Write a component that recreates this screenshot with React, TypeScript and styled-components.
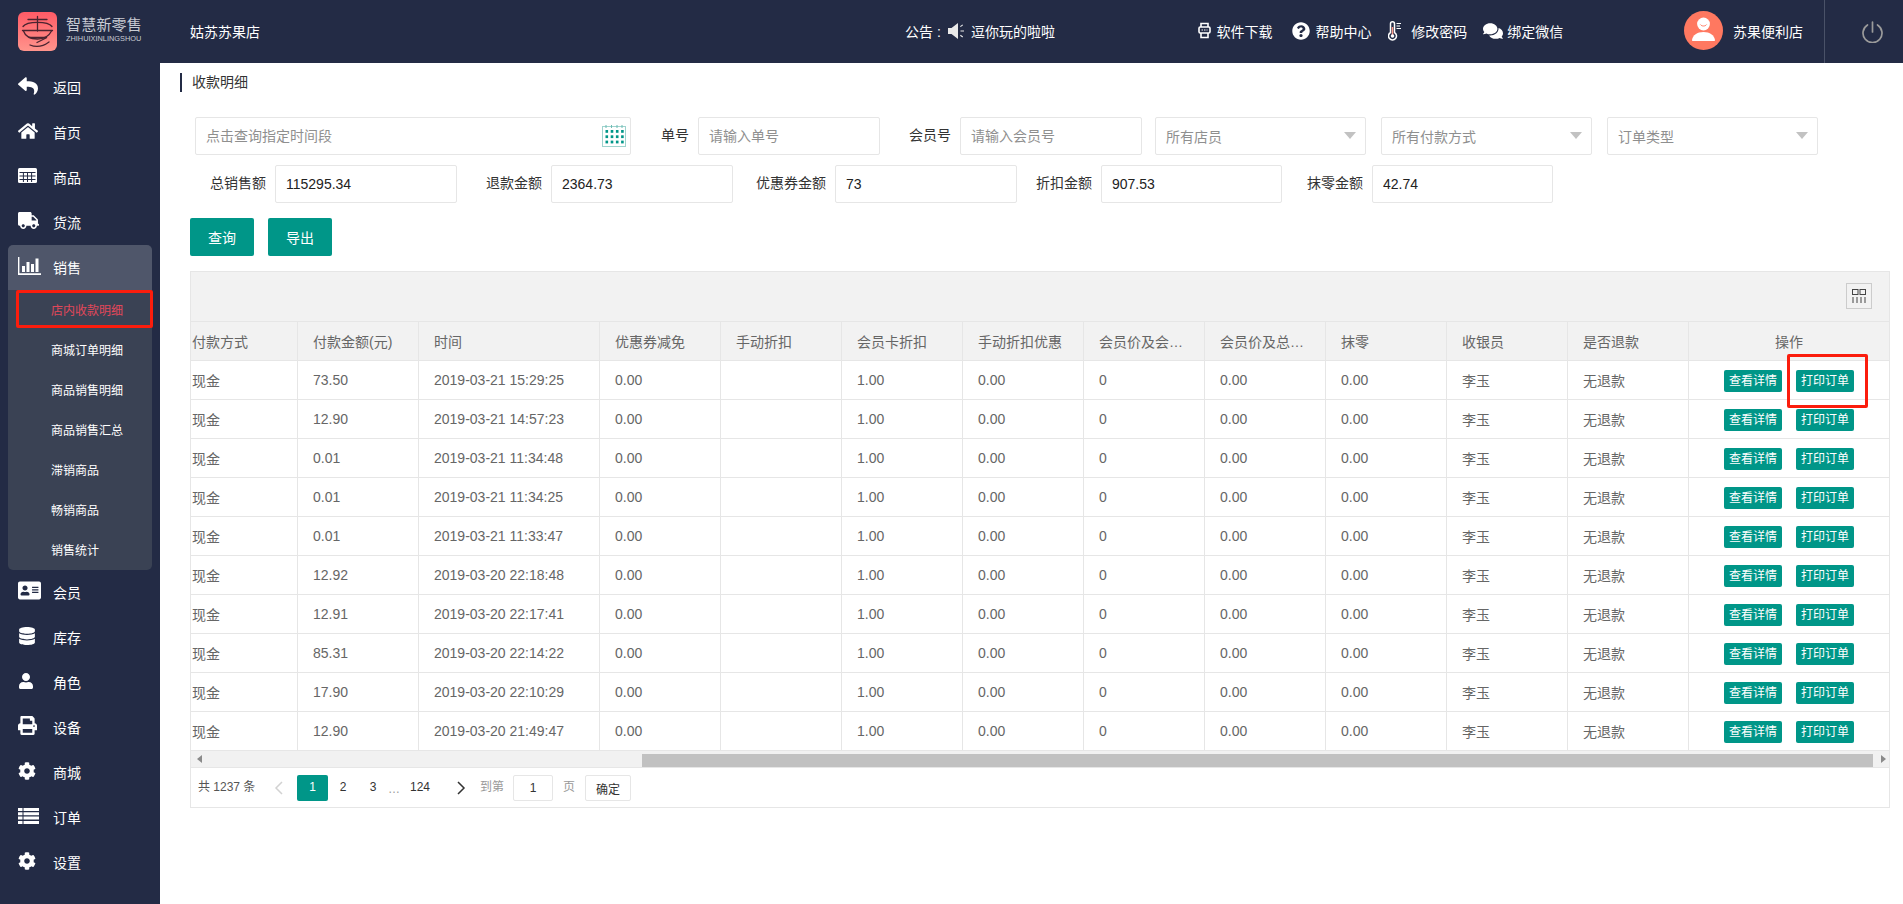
import React from "react";
import styled, { createGlobalStyle } from "styled-components";
import {
  FaReply,
  FaHome,
  FaTruck,
  FaAddressCard,
  FaDatabase,
  FaUser,
  FaPrint,
  FaCog,
  FaQuestionCircle,
  FaComments,
} from "react-icons/fa";

const GlobalStyle = createGlobalStyle`
  html, body {
    margin: 0;
    padding: 0;
    height: 100%;
    background: #fff;
    overflow: hidden;
    font-family: "Liberation Sans", "Noto Sans CJK SC", sans-serif;
    font-size: 14px;
    color: #333;
  }
  * {
    box-sizing: border-box;
  }
`;

const Page = styled.div`
  width: 1903px;
  height: 904px;
  display: flex;
  flex-direction: column;
`;

// top bar
const Header = styled.header`
  height: 63px;
  flex: none;
  background: #232b45;
  color: #fff;
  display: flex;
  align-items: center;
  padding-left: 18px;
`;

const LogoBox = styled.div`
  width: 39px;
  height: 39px;
  flex: none;
  line-height: 0;
`;

const LogoText = styled.div`
  width: 80px;
  margin-left: 9px;
  color: #c9ccd4;
`;

const LogoName = styled.div`
  font-size: 15px;
  line-height: 18px;
  letter-spacing: 0.2px;
  margin-top: -3px;
`;

const LogoPinyin = styled.div`
  font-size: 8px;
  line-height: 10px;
  white-space: nowrap;
  transform-origin: left center;
  transform: scaleX(0.92);
`;

const ShopName = styled.div`
  margin-left: 44px;
  margin-top: -1px;
  width: 70px;
  white-space: nowrap;
`;

const Notice = styled.div`
  margin-left: 645px;
  margin-top: -2px;
  display: flex;
  align-items: center;
  white-space: nowrap;
  width: 151px;
`;

const NoticeLabel = styled.span`
  width: 43px;
`;

const NoticeIcon = styled.span`
  width: 23px;
  height: 18px;
  line-height: 0;
`;

const TopLinks = styled.nav`
  margin-left: 142px;
  margin-top: -2px;
  display: flex;
  gap: 16px;
  width: 366px;
`;

const TopLink = styled.a`
  display: flex;
  align-items: center;
  color: #fff;
  white-space: nowrap;
`;

const TopIcon = styled.span<{ $w: number; $pad?: number }>`
  width: ${(p) => p.$w}px;
  padding-left: ${(p) => p.$pad || 0}px;
  display: flex;
  align-items: center;
  flex: none;
`;

const Avatar = styled.div`
  margin-left: 120px;
  margin-top: -2px;
  width: 39px;
  height: 39px;
  flex: none;
  line-height: 0;
`;

const UserName = styled.div`
  margin-left: 10px;
  margin-top: -1px;
  width: 91px;
  white-space: nowrap;
`;

const PowerBox = styled.div`
  height: 100%;
  flex: 1;
  border-left: 1px solid #4a5268;
  display: flex;
  align-items: center;
  padding-left: 37px;
`;

const Body = styled.div`
  flex: 1;
  display: flex;
  min-height: 0;
`;

// left menu
const Sidebar = styled.aside`
  width: 160px;
  flex: none;
  background: #232b45;
  padding-top: 2px;
`;

const NavItem = styled.div<{ $active?: boolean }>`
  height: 45px;
  margin: 0 8px;
  padding: 0 0 2px 10px;
  display: flex;
  align-items: center;
  color: #fff;
  background: ${(p) => (p.$active ? "#4f566a" : "transparent")};
  border-radius: ${(p) => (p.$active ? "5px 5px 0 0" : "0")};
`;

const NavIcon = styled.span`
  width: 35px;
  flex: none;
  display: flex;
  align-items: center;
  margin-top: -2px;
`;

const SubMenu = styled.div`
  margin: 0 8px;
  background: #3a4254;
  border-radius: 0 0 5px 5px;
`;

const SubItem = styled.div<{ $active?: boolean }>`
  position: relative;
  height: 40px;
  line-height: 42px;
  padding-left: 43px;
  font-size: 12px;
  color: ${(p) => (p.$active ? "#e2475a" : "#fff")};
`;

const SubMark = styled.span`
  position: absolute;
  left: 8px;
  right: -1px;
  top: 0;
  height: 38px;
  border: 3px solid #fb1d0d;
  border-radius: 2px;
`;

const Main = styled.main`
  flex: 1;
  padding: 10px 13px 0 20px;
  min-width: 0;
`;

const Title = styled.div`
  height: 19px;
  line-height: 19px;
  border-left: 2px solid #232b45;
  padding-left: 10px;
  color: #333;
`;

const Content = styled.div`
  padding-left: 10px;
`;

const Form = styled.div`
  margin-top: 25px;
  display: flex;
  flex-direction: column;
  gap: 10px;
`;

const FormRow = styled.div<{ $inset?: number }>`
  display: flex;
  height: 38px;
  padding-left: ${(p) => p.$inset || 0}px;
`;

const FieldLabel = styled.label<{ $w: number }>`
  width: ${(p) => p.$w}px;
  flex: none;
  margin-right: 9px;
  text-align: right;
  line-height: 36px;
  color: #333;
  white-space: nowrap;
`;

const TextInput = styled.input<{ $w: number }>`
  width: ${(p) => p.$w}px;
  flex: none;
  height: 38px;
  border: 1px solid #e6e6e6;
  border-radius: 2px;
  padding: 0 10px 1px;
  font: inherit;
  color: #222;
  background: #fff;
  outline: none;
  &::placeholder {
    color: #8f8f8f;
    opacity: 1;
  }
`;

const DateBox = styled.div`
  position: relative;
  width: 436px;
  flex: none;
`;

const DateIcon = styled.span`
  position: absolute;
  right: 5px;
  top: 8px;
  line-height: 0;
`;

const SelectBox = styled.div<{ $gap: number }>`
  width: 211px;
  flex: none;
  height: 38px;
  margin-left: ${(p) => p.$gap}px;
  border: 1px solid #e6e6e6;
  border-radius: 2px;
  padding: 0 9px 1px 10px;
  display: flex;
  align-items: center;
  justify-content: space-between;
  color: #8f8f8f;
`;

const Caret = styled.i`
  width: 0;
  height: 0;
  border-style: solid;
  border-width: 7px 6px 0;
  border-color: #c2c2c2 transparent transparent;
`;

const Actions = styled.div`
  margin-top: 15px;
  display: flex;
  gap: 14px;
`;

const Button = styled.button`
  width: 64px;
  height: 38px;
  border: 0;
  border-radius: 2px;
  background: #009688;
  color: #fff;
  font: inherit;
  padding: 0;
`;

// table
const TableBox = styled.div`
  margin-top: 15px;
  width: 1700px;
  border: 1px solid #e6e6e6;
`;

const TableTool = styled.div`
  height: 50px;
  background: #f2f2f2;
  border-bottom: 1px solid #e6e6e6;
  display: flex;
  align-items: center;
  justify-content: flex-end;
  padding: 0 17px 2px 0;
`;

const ToolIcon = styled.span`
  width: 26px;
  height: 26px;
  border: 1px solid #ccc;
  display: flex;
  align-items: center;
  justify-content: center;
`;

const Table = styled.table`
  width: 1698px;
  table-layout: fixed;
  border-collapse: separate;
  border-spacing: 0;
`;

const Th = styled.th<{ $center?: boolean; $flush?: boolean }>`
  height: 39px;
  padding: 0 15px 0 ${(p) => (p.$flush ? 1 : 15)}px;
  background: #f2f2f2;
  border-right: 1px solid #e6e6e6;
  border-bottom: 1px solid #e6e6e6;
  font-weight: 400;
  color: #666;
  text-align: ${(p) => (p.$center ? "center" : "left")};
  white-space: nowrap;
  overflow: hidden;
  text-overflow: ellipsis;
  &:last-child {
    border-right: 0;
  }
`;

const Td = styled.td<{ $flush?: boolean }>`
  height: 39px;
  padding: 0 15px 0 ${(p) => (p.$flush ? 1 : 15)}px;
  border-right: 1px solid #e6e6e6;
  border-bottom: 1px solid #e6e6e6;
  color: #666;
  white-space: nowrap;
  overflow: hidden;
`;

const OpCell = styled.td`
  position: relative;
  height: 39px;
  border-bottom: 1px solid #e6e6e6;
  padding: 1px 0 0;
`;

const OpWrap = styled.div`
  display: flex;
  justify-content: center;
  gap: 14px;
`;

const MiniButton = styled.a`
  width: 58px;
  height: 22px;
  line-height: 22px;
  border-radius: 2px;
  background: #009688;
  color: #fff;
  font-size: 12px;
  text-align: center;
`;

const PrintMark = styled.span`
  position: absolute;
  left: 98px;
  top: -7px;
  width: 81px;
  height: 54px;
  border: 3px solid #fb1d0d;
  border-radius: 2px;
  z-index: 2;
`;

const ScrollTrack = styled.div`
  height: 16px;
  background: #f1f1f1;
  display: flex;
  align-items: center;
`;

const ScrollArrow = styled.i<{ $right?: boolean }>`
  width: 0;
  height: 0;
  flex: none;
  border-style: solid;
  border-width: 4px 0 4px 5px;
  border-color: transparent transparent transparent #8a8a8a;
  transform: ${(p) => (p.$right ? "none" : "rotate(180deg)")};
  margin-left: ${(p) => (p.$right ? "8px" : "6px")};
`;

const ScrollThumb = styled.div`
  margin-left: 440px;
  width: 1231px;
  height: 13px;
  margin-top: 3px;
  background: #c1c1c1;
`;

const Pager = styled.div`
  height: 40px;
  border-top: 1px solid #e6e6e6;
  padding: 7px 0 0 7px;
  display: flex;
  align-items: flex-start;
  font-size: 12px;
  color: #333;
`;

const PagerCount = styled.span`
  width: 57px;
  margin-right: 12px;
  line-height: 25px;
  color: #555;
  white-space: nowrap;
`;

const PageArrow = styled.span<{ $w: number; $pad: number }>`
  width: ${(p) => p.$w}px;
  height: 26px;
  padding-left: ${(p) => p.$pad}px;
  display: flex;
  align-items: center;
  flex: none;
`;

const PageNum = styled.a<{ $active?: boolean; $w?: number }>`
  width: ${(p) => p.$w || 30}px;
  height: 26px;
  line-height: 25px;
  text-align: center;
  flex: none;
  border-radius: 2px;
  background: ${(p) => (p.$active ? "#009688" : "transparent")};
  color: ${(p) => (p.$active ? "#fff" : "#333")};
`;

const PageDots = styled.span`
  width: 17px;
  line-height: 28px;
  color: #999;
`;

const PagerMuted = styled.span<{ $w: number }>`
  width: ${(p) => p.$w}px;
  line-height: 25px;
  color: #999;
  flex: none;
`;

const PageInput = styled.input`
  width: 40px;
  height: 26px;
  border: 1px solid #e6e6e6;
  border-radius: 2px;
  margin-right: 10px;
  text-align: center;
  font: inherit;
  color: #333;
  padding: 0;
  outline: none;
`;

const PageOk = styled.button`
  width: 46px;
  height: 26px;
  border: 1px solid #e6e6e6;
  border-radius: 2px;
  margin-left: 10px;
  background: #fff;
  font: inherit;
  color: #333;
  padding: 0;
`;

const LogoMark = () => (
  <svg width="39" height="39" viewBox="0 0 39 39">
    <defs>
      <linearGradient id="logoBg" x1="0" y1="0" x2="0" y2="1">
        <stop offset="0" stopColor="#ff5b66" />
        <stop offset="1" stopColor="#ff948c" />
      </linearGradient>
    </defs>
    <rect width="39" height="39" rx="6" fill="url(#logoBg)" />
    <g fill="none" stroke="#4a2430" strokeWidth="1.3" strokeLinecap="round">
      <path d="M10 7.500H29M19.500 4.500V19" />
      <path d="M5 14.500C9 9 30 9 34 14.500" />
      <path d="M4.500 18.500H34.500" />
      <path d="M5.500 19c2 6 8 8 14 8s11-2 14-8" />
      <path d="M12 25.500H29L19 30.500" />
      <path d="M12 33c6 2.500 13 1.500 19-3" />
    </g>
  </svg>
);

const SpeakerIcon = () => (
  <svg width="18" height="18" viewBox="0 0 18 18" fill="#e9e9e9">
    <path d="M0 6h3.500L10 1v16l-6.500-5H0z" />
    <path d="M12 4.200l2.400-1.800.7.900-2.400 1.800zM12.500 8.400h3.500v1.200h-3.500zM12 13.800l.7-1 2.400 1.800-.7 1z" />
  </svg>
);

const DownloadIcon = () => (
  <svg width="13" height="17" viewBox="0 0 13 17" fill="none" stroke="#fff" strokeWidth="1.600">
    <path d="M3 5V1.500h7V5" />
    <rect x="1" y="5" width="11" height="6" rx="1.200" />
    <path d="M3 11v4.500h7V11" />
    <path d="M3.500 8h1.500M6 8h1.500M8.500 8h1" strokeWidth="1" />
  </svg>
);

const ThermoIcon = () => (
  <svg width="14" height="20" viewBox="0 0 14 20" fill="none" stroke="#fff" strokeWidth="1.500">
    <path d="M2.500 11.500V2.800a2 2 0 0 1 4 0v8.700a4 4 0 1 1-4 0z" />
    <path d="M4.500 6v8" strokeWidth="1.500" stroke="#ff9a8a" />
    <path d="M8.500 2.500H13M8.500 5H12M8.500 7.500H13" strokeWidth="1" />
    <circle cx="4.500" cy="15" r="1.800" fill="#fff" stroke="none" />
  </svg>
);

const UserBadge = () => (
  <svg width="39" height="39" viewBox="0 0 39 39">
    <circle cx="19.500" cy="19.500" r="19.500" fill="#ff7860" />
    <circle cx="19.500" cy="13" r="6.400" fill="#fff" />
    <path d="M16.400 13.500c1.400 2 4.800 2 6.200 0" fill="none" stroke="#ff7860" strokeWidth="1" />
    <path d="M8 29c.8-5 5-8 11.500-8S30 24 31 29c0 .6-.4 1-1 1H9c-.6 0-1-.4-1-1z" fill="#fff" />
  </svg>
);

const PowerIcon = () => (
  <svg width="21" height="22" viewBox="0 0 21 22" fill="none" stroke="#9b9b9b" strokeWidth="1.700" strokeLinecap="round">
    <path d="M5.500 4A9.500 9.500 0 1 0 15.500 4" />
    <path d="M10.500 1v10" />
  </svg>
);

const BarIcon = () => (
  <svg width="23" height="18" viewBox="0 0 23 18" fill="#fff">
    <path d="M0 0h1.400v16.200H23V18H0z" />
    <rect x="4" y="9" width="3" height="6" />
    <rect x="8.500" y="5" width="3" height="10" />
    <rect x="13" y="7" width="3" height="8" />
    <rect x="17.500" y="1.500" width="3" height="13.500" />
  </svg>
);

const GridIcon = () => (
  <svg width="19" height="15" viewBox="0 0 19 15">
    <rect width="19" height="15" rx="1.500" fill="#fff" />
    <path d="M1.500 4.500H17.500M1.500 8H17.500M1.500 11.500H17.500M5.400 4.500V14M9.500 4.500V14M13.600 4.500V14" stroke="#232b45" strokeWidth="1" />
  </svg>
);

const StripesIcon = () => (
  <svg width="21" height="16" viewBox="0 0 21 16">
    <path d="M0 0h21v3H0zM0 4.300h21v3H0zM0 8.600h21v3H0zM0 12.900h21V16H0z" fill="#fff" />
    <path d="M5 0v16" stroke="#232b45" strokeWidth="1" />
  </svg>
);

const CalendarIcon = () => (
  <svg width="24" height="22" viewBox="0 0 24 22">
    <rect x="0.500" y="1.500" width="23" height="20" fill="#fff" stroke="#9fd3ce" />
    <path d="M4 0v3M9.500 0v3M15 0v3M20 0v3" stroke="#6dbcb4" strokeWidth="1" />
    {[5, 10.300, 15.600].map((y) =>
      [3.500, 8.700, 13.900, 19.100].map((x) => (
        <rect key={`${x}-${y}`} x={x} y={y} width="2.600" height="2.800" fill="#009688" />
      ))
    )}
  </svg>
);

const ColsIcon = () => (
  <svg width="14" height="14" viewBox="0 0 14 14" fill="none" stroke="#444" strokeWidth="1">
    <rect x="0.500" y="0.500" width="5.500" height="5" />
    <rect x="8" y="0.500" width="5.500" height="5" />
    <path d="M1 8v6M5 8v6M9 8v6M13 8v6" />
  </svg>
);

const Chevron = ({ left, color }: { left?: boolean; color: string }) => (
  <svg width="9" height="14" viewBox="0 0 9 14" fill="none" stroke={color} strokeWidth="1.500">
    <path d={left ? "M8 1L2 7l6 6" : "M1 1l6 6-6 6"} />
  </svg>
);

const subMenu = ["店内收款明细", "商城订单明细", "商品销售明细", "商品销售汇总", "滞销商品", "畅销商品", "销售统计"];

const columns = [
  { title: "付款方式", width: 107 },
  { title: "付款金额(元)", width: 121 },
  { title: "时间", width: 181 },
  { title: "优惠券减免", width: 121 },
  { title: "手动折扣", width: 121 },
  { title: "会员卡折扣", width: 121 },
  { title: "手动折扣优惠", width: 121 },
  { title: "会员价及会员优惠", width: 121 },
  { title: "会员价及总优惠", width: 121 },
  { title: "抹零", width: 121 },
  { title: "收银员", width: 121 },
  { title: "是否退款", width: 121 },
  { title: "操作", width: 200 },
];

const rows = [
  ["73.50", "2019-03-21 15:29:25"],
  ["12.90", "2019-03-21 14:57:23"],
  ["0.01", "2019-03-21 11:34:48"],
  ["0.01", "2019-03-21 11:34:25"],
  ["0.01", "2019-03-21 11:33:47"],
  ["12.92", "2019-03-20 22:18:48"],
  ["12.91", "2019-03-20 22:17:41"],
  ["85.31", "2019-03-20 22:14:22"],
  ["17.90", "2019-03-20 22:10:29"],
  ["12.90", "2019-03-20 21:49:47"],
];

export default function App() {
  return (
    <Page>
      <GlobalStyle />
      <Header>
        <LogoBox>
          <LogoMark />
        </LogoBox>
        <LogoText>
          <LogoName>智慧新零售</LogoName>
          <LogoPinyin>ZHIHUIXINLINGSHOU</LogoPinyin>
        </LogoText>
        <ShopName>姑苏苏果店</ShopName>
        <Notice>
          <NoticeLabel>公告 :</NoticeLabel>
          <NoticeIcon>
            <SpeakerIcon />
          </NoticeIcon>
          逗你玩的啦啦
        </Notice>
        <TopLinks>
          <TopLink>
            <TopIcon $w={18.6}>
              <DownloadIcon />
            </TopIcon>
            软件下载
          </TopLink>
          <TopLink>
            <TopIcon $w={27} $pad={3}>
              <FaQuestionCircle size={18} />
            </TopIcon>
            帮助中心
          </TopLink>
          <TopLink>
            <TopIcon $w={23.6}>
              <ThermoIcon />
            </TopIcon>
            修改密码
          </TopLink>
          <TopLink>
            <TopIcon $w={24}>
              <FaComments size={20} />
            </TopIcon>
            绑定微信
          </TopLink>
        </TopLinks>
        <Avatar>
          <UserBadge />
        </Avatar>
        <UserName>苏果便利店</UserName>
        <PowerBox>
          <PowerIcon />
        </PowerBox>
      </Header>
      <Body>
        <Sidebar>
          <NavItem>
            <NavIcon>
              <FaReply size={20} />
            </NavIcon>
            返回
          </NavItem>
          <NavItem>
            <NavIcon>
              <FaHome size={20} />
            </NavIcon>
            首页
          </NavItem>
          <NavItem>
            <NavIcon>
              <GridIcon />
            </NavIcon>
            商品
          </NavItem>
          <NavItem>
            <NavIcon>
              <FaTruck size={21} />
            </NavIcon>
            货流
          </NavItem>
          <NavItem $active>
            <NavIcon>
              <BarIcon />
            </NavIcon>
            销售
          </NavItem>
          <SubMenu>
            {subMenu.map((name, i) => (
              <SubItem key={name} $active={i === 0}>
                {name}
                {i === 0 && <SubMark />}
              </SubItem>
            ))}
          </SubMenu>
          <NavItem>
            <NavIcon>
              <FaAddressCard size={23} />
            </NavIcon>
            会员
          </NavItem>
          <NavItem>
            <NavIcon>
              <FaDatabase size={18} />
            </NavIcon>
            库存
          </NavItem>
          <NavItem>
            <NavIcon>
              <FaUser size={16} />
            </NavIcon>
            角色
          </NavItem>
          <NavItem>
            <NavIcon>
              <FaPrint size={19} />
            </NavIcon>
            设备
          </NavItem>
          <NavItem>
            <NavIcon>
              <FaCog size={18} />
            </NavIcon>
            商城
          </NavItem>
          <NavItem>
            <NavIcon>
              <StripesIcon />
            </NavIcon>
            订单
          </NavItem>
          <NavItem>
            <NavIcon>
              <FaCog size={18} />
            </NavIcon>
            设置
          </NavItem>
        </Sidebar>
        <Main>
          <Title>收款明细</Title>
          <Content>
            <Form>
              <FormRow $inset={5}>
                <DateBox>
                  <TextInput $w={436} placeholder="点击查询指定时间段" />
                  <DateIcon>
                    <CalendarIcon />
                  </DateIcon>
                </DateBox>
                <FieldLabel $w={58}>单号</FieldLabel>
                <TextInput $w={182} placeholder="请输入单号" />
                <FieldLabel $w={71}>会员号</FieldLabel>
                <TextInput $w={182} placeholder="请输入会员号" />
                <SelectBox $gap={13}>
                  所有店员
                  <Caret />
                </SelectBox>
                <SelectBox $gap={15}>
                  所有付款方式
                  <Caret />
                </SelectBox>
                <SelectBox $gap={15}>
                  订单类型
                  <Caret />
                </SelectBox>
              </FormRow>
              <FormRow>
                <FieldLabel $w={76}>总销售额</FieldLabel>
                <TextInput $w={182} defaultValue="115295.34" />
                <FieldLabel $w={85}>退款金额</FieldLabel>
                <TextInput $w={182} defaultValue="2364.73" />
                <FieldLabel $w={93}>优惠券金额</FieldLabel>
                <TextInput $w={182} defaultValue="73" />
                <FieldLabel $w={75}>折扣金额</FieldLabel>
                <TextInput $w={181} defaultValue="907.53" />
                <FieldLabel $w={81}>抹零金额</FieldLabel>
                <TextInput $w={181} defaultValue="42.74" />
              </FormRow>
            </Form>
            <Actions>
              <Button>查询</Button>
              <Button>导出</Button>
            </Actions>
            <TableBox>
              <TableTool>
                <ToolIcon>
                  <ColsIcon />
                </ToolIcon>
              </TableTool>
              <Table>
                <colgroup>
                  {columns.map((col) => (
                    <col key={col.title} width={col.width} />
                  ))}
                </colgroup>
                <thead>
                  <tr>
                    {columns.map((col, i) => (
                      <Th key={col.title} $flush={i === 0} $center={i === columns.length - 1}>
                        {col.title}
                      </Th>
                    ))}
                  </tr>
                </thead>
                <tbody>
                  {rows.map((row, i) => (
                    <tr key={row[1]}>
                      <Td $flush>现金</Td>
                      <Td>{row[0]}</Td>
                      <Td>{row[1]}</Td>
                      <Td>0.00</Td>
                      <Td />
                      <Td>1.00</Td>
                      <Td>0.00</Td>
                      <Td>0</Td>
                      <Td>0.00</Td>
                      <Td>0.00</Td>
                      <Td>李玉</Td>
                      <Td>无退款</Td>
                      <OpCell>
                        <OpWrap>
                          <MiniButton>查看详情</MiniButton>
                          <MiniButton>打印订单</MiniButton>
                        </OpWrap>
                        {i === 0 && <PrintMark />}
                      </OpCell>
                    </tr>
                  ))}
                </tbody>
              </Table>
              <ScrollTrack>
                <ScrollArrow />
                <ScrollThumb />
                <ScrollArrow $right />
              </ScrollTrack>
              <Pager>
                <PagerCount>共 1237 条</PagerCount>
                <PageArrow $w={30} $pad={7}>
                  <Chevron left color="#d2d2d2" />
                </PageArrow>
                <PageNum $active $w={31}>
                  1
                </PageNum>
                <PageNum>2</PageNum>
                <PageNum>3</PageNum>
                <PageDots>…</PageDots>
                <PageNum>124</PageNum>
                <PageArrow $w={45} $pad={22}>
                  <Chevron color="#333" />
                </PageArrow>
                <PagerMuted $w={33}>到第</PagerMuted>
                <PageInput defaultValue="1" />
                <PagerMuted $w={12}>页</PagerMuted>
                <PageOk>确定</PageOk>
              </Pager>
            </TableBox>
          </Content>
        </Main>
      </Body>
    </Page>
  );
}
